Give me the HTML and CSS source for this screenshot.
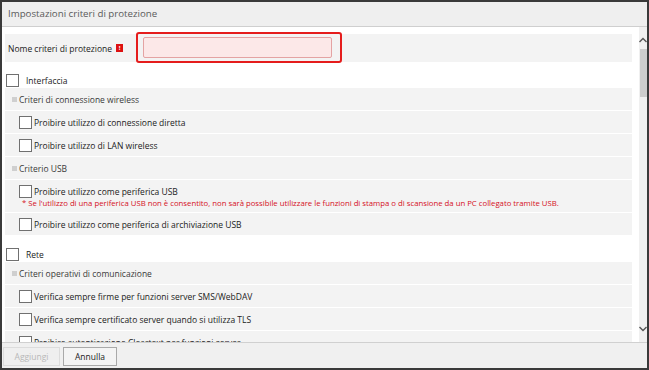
FILE: index.html
```html
<!DOCTYPE html>
<html lang="it">
<head>
    <meta charset="UTF-8">
    <meta name="viewport" content="width=device-width, initial-scale=1.0">
    <title>Impostazioni criteri di protezione</title>
    <link rel="stylesheet" href="styles.css">
</head>
<body>

    <div class="dialog">
        <div class="dialog-title">Impostazioni criteri di protezione</div>

        <div class="dialog-body">
            <div class="settings">

                <!-- policy name -->
                <div class="name-row">
                    <span class="name-label">Nome criteri di protezione</span>
                    <span class="required">!</span>
                    <div class="name-highlight">
                        <input class="name-input" type="text">
                    </div>
                </div>

                <!-- Interfaccia -->
                <div class="group-row"><span class="check"></span>Interfaccia</div>

                <div class="sub-head"><span class="bullet"></span>Criteri di connessione wireless</div>
                <div class="item"><span class="check"></span>Proibire utilizzo di connessione diretta</div>
                <div class="item"><span class="check"></span>Proibire utilizzo di LAN wireless</div>

                <div class="sub-head"><span class="bullet"></span>Criterio USB</div>
                <div class="item item-note">
                    <div class="item-line"><span class="check"></span>Proibire utilizzo come periferica USB</div>
                    <div class="note">* Se l'utilizzo di una periferica USB non è consentito, non sarà possibile utilizzare le funzioni di stampa o di scansione da un PC collegato tramite USB.</div>
                </div>
                <div class="item"><span class="check"></span>Proibire utilizzo come periferica di archiviazione USB</div>

                <!-- Rete -->
                <div class="group-row"><span class="check"></span>Rete</div>

                <div class="sub-head"><span class="bullet"></span>Criteri operativi di comunicazione</div>
                <div class="item"><span class="check"></span>Verifica sempre firme per funzioni server SMS/WebDAV</div>
                <div class="item"><span class="check"></span>Verifica sempre certificato server quando si utilizza TLS</div>
                <div class="item"><span class="check"></span>Proibire autenticazione Cleartext per funzioni server</div>
            </div>

            <div class="scrollbar">
                <svg class="arrow" width="8" height="6" viewBox="0 0 8 6"><path d="M0.5 5 L4 1.5 L7.5 5" fill="none" stroke="#555" stroke-width="1.4"/></svg>
                <div class="thumb"></div>
                <div class="track"></div>
                <svg class="arrow" width="8" height="6" viewBox="0 0 8 6"><path d="M0.5 1 L4 4.5 L7.5 1" fill="none" stroke="#555" stroke-width="1.4"/></svg>
            </div>
        </div>

        <div class="dialog-footer">
            <button class="btn btn-add" disabled>Aggiungi</button>
            <button class="btn btn-cancel">Annulla</button>
        </div>
    </div>

</body>
</html>
```

FILE: styles.css
```css
body {
    margin: 0;
    font-family: "Open Sans", "Noto Sans", sans-serif;
    font-size: 8.5px;
    color: #222;
    background: #fff;
}

.dialog {
    width: 649px;
    height: 370px;
    box-sizing: border-box;
    border: 2px solid #3a3a3a;
    display: flex;
    flex-direction: column;
    background: #fff;
}

.dialog-title {
    height: 24px;
    line-height: 24px;
    padding-left: 6px;
    background: #efefef;
    border-bottom: 1px solid #cfcfcf;
    color: #5a5a5a;
    font-size: 9.7px;
}

.dialog-body {
    flex: 1;
    display: flex;
    overflow: hidden;
}

.settings {
    flex: 1;
    padding: 7px 7px 0 3px;
    overflow: hidden;
}

/* name row */
.name-row {
    height: 28px;
    display: flex;
    align-items: center;
    background: #f3f3f3;
    padding-left: 3px;
}

.name-label {
    margin-right: 4px;
}

.required {
    width: 7px;
    height: 8px;
    background: #d11;
    color: #fff;
    font-size: 6px;
    line-height: 8px;
    text-align: center;
    font-weight: bold;
}

.name-highlight {
    margin-left: 13px;
    margin-top: -2px;
    margin-bottom: -1px;
    width: 206px;
    height: 31px;
    box-sizing: border-box;
    border: 2px solid #e51c1c;
    border-radius: 3px;
    padding: 3px 8px 0 5px;
}

.name-input {
    display: block;
    width: 100%;
    height: 21px;
    box-sizing: border-box;
    margin: 0;
    border: 1px solid #e4a3a3;
    background: #fce8e8;
    border-radius: 2px;
}

/* checkbox */
.check {
    width: 11px;
    height: 11px;
    border: 1px solid #707070;
    background: #fff;
    flex-shrink: 0;
}

.group-row {
    height: 26px;
    display: flex;
    align-items: center;
    padding-left: 1px;
    padding-top: 11px;
    box-sizing: border-box;
}

.group-row .check {
    margin-right: 7px;
}

.sub-head {
    height: 22px;
    display: flex;
    align-items: center;
    background: #f3f3f3;
    margin-bottom: 1px;
    padding-left: 7px;
    color: #3a3a3a;
}

.bullet {
    width: 5px;
    height: 5px;
    background: #cfcfcf;
    margin-right: 2px;
}

.item {
    height: 22px;
    display: flex;
    align-items: center;
    background: #f3f3f3;
    margin-bottom: 1px;
    padding-left: 14px;
}

.item .check {
    margin-right: 2px;
}

.item-note {
    height: 32px;
    display: block;
    padding-top: 4px;
    box-sizing: border-box;
}

.item-line {
    display: flex;
    align-items: center;
    height: 14px;
}

.note {
    color: #d5101e;
    font-size: 7.75px;
    line-height: 11px;
    padding-left: 3px;
    white-space: nowrap;
}

/* fake scrollbar */
.scrollbar {
    width: 8px;
    background: #f0f0f0;
    display: flex;
    flex-direction: column;
    align-items: center;
}

.arrow {
    margin: 10px 0 6px;
}

.scrollbar .arrow:last-child {
    margin: 6px 0 10px;
}

.thumb {
    width: 7px;
    height: 48px;
    background: #cdcdcd;
}

.track {
    flex: 1;
}

/* footer */
.dialog-footer {
    height: 21px;
    border-top: 1px solid #d0d0d0;
    background: #f0f0f0;
    display: flex;
    align-items: flex-start;
    padding: 4px 0 0 1px;
    gap: 3px;
}

.btn {
    height: 19px;
    padding: 0;
    font-family: "Open Sans", "Noto Sans", sans-serif;
    font-size: 8.5px;
    color: #222;
    background: #f4f4f4;
    border: 1px solid #a9a9a9;
    border-radius: 0;
}

.btn-add {
    width: 57px;
}

.btn-cancel {
    width: 54px;
}

.btn[disabled] {
    color: #b8b8b8;
    border-color: #dcdcdc;
    background: #efefef;
}
```
